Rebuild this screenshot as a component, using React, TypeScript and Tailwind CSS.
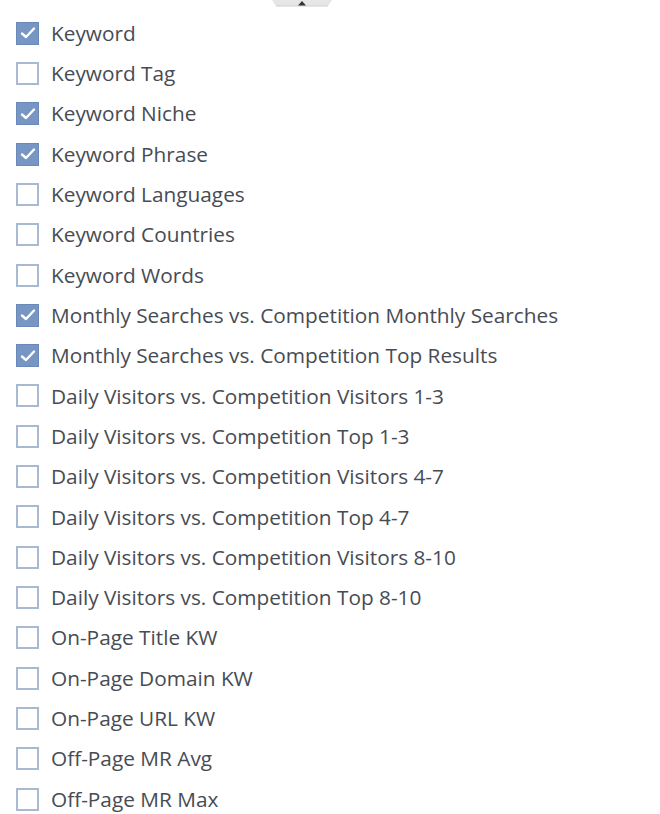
import React from "react";

const items: [string, boolean][] = [
  ["Keyword", true],
  ["Keyword Tag", false],
  ["Keyword Niche", true],
  ["Keyword Phrase", true],
  ["Keyword Languages", false],
  ["Keyword Countries", false],
  ["Keyword Words", false],
  ["Monthly Searches vs. Competition Monthly Searches", true],
  ["Monthly Searches vs. Competition Top Results", true],
  ["Daily Visitors vs. Competition Visitors 1-3", false],
  ["Daily Visitors vs. Competition Top 1-3", false],
  ["Daily Visitors vs. Competition Visitors 4-7", false],
  ["Daily Visitors vs. Competition Top 4-7", false],
  ["Daily Visitors vs. Competition Visitors 8-10", false],
  ["Daily Visitors vs. Competition Top 8-10", false],
  ["On-Page Title KW", false],
  ["On-Page Domain KW", false],
  ["On-Page URL KW", false],
  ["Off-Page MR Avg", false],
  ["Off-Page MR Max", false],
];

function Box({ checked }: { checked: boolean }) {
  if (checked) {
    return (
      <div className="w-[23px] h-[23px] shrink-0 bg-[#7796c4] border border-[#6a89b8] flex items-center justify-center">
        <svg width="18" height="18" viewBox="0 0 18 18">
          <path d="M3 9.5 L7 13 L15 4.5" fill="none" stroke="#fff" strokeWidth="2.4" strokeLinecap="round" strokeLinejoin="round" />
        </svg>
      </div>
    );
  }
  return <div className="w-[23px] h-[23px] shrink-0 bg-white border-2 border-[#a9b9d2]" />;
}

export default function App() {
  return (
    <div className="w-[660px] h-[814px] bg-white relative overflow-hidden" style={{ fontFamily: '"Open Sans", sans-serif' }}>
      <div className="absolute left-[272px] top-0">
        <svg width="60" height="7" viewBox="0 0 60 7">
          <path d="M0 0 H60 L56 6 H4 Z" fill="#e6e6e6" />
          <path d="M4 6 H56" stroke="#d0d0d0" strokeWidth="1" />
          <path d="M26 5.5 L30 1 L34 5.5 Z" fill="#333" />
        </svg>
      </div>
      <div className="pt-[13px] pl-[16px] flex flex-col">
        {items.map(([label, checked]) => (
          <div key={label} className="h-[40.32px] flex items-center gap-[12px]">
            <Box checked={checked} />
            <span className="text-[20.8px] text-[#474c54] leading-none whitespace-nowrap">{label}</span>
          </div>
        ))}
      </div>
    </div>
  );
}
